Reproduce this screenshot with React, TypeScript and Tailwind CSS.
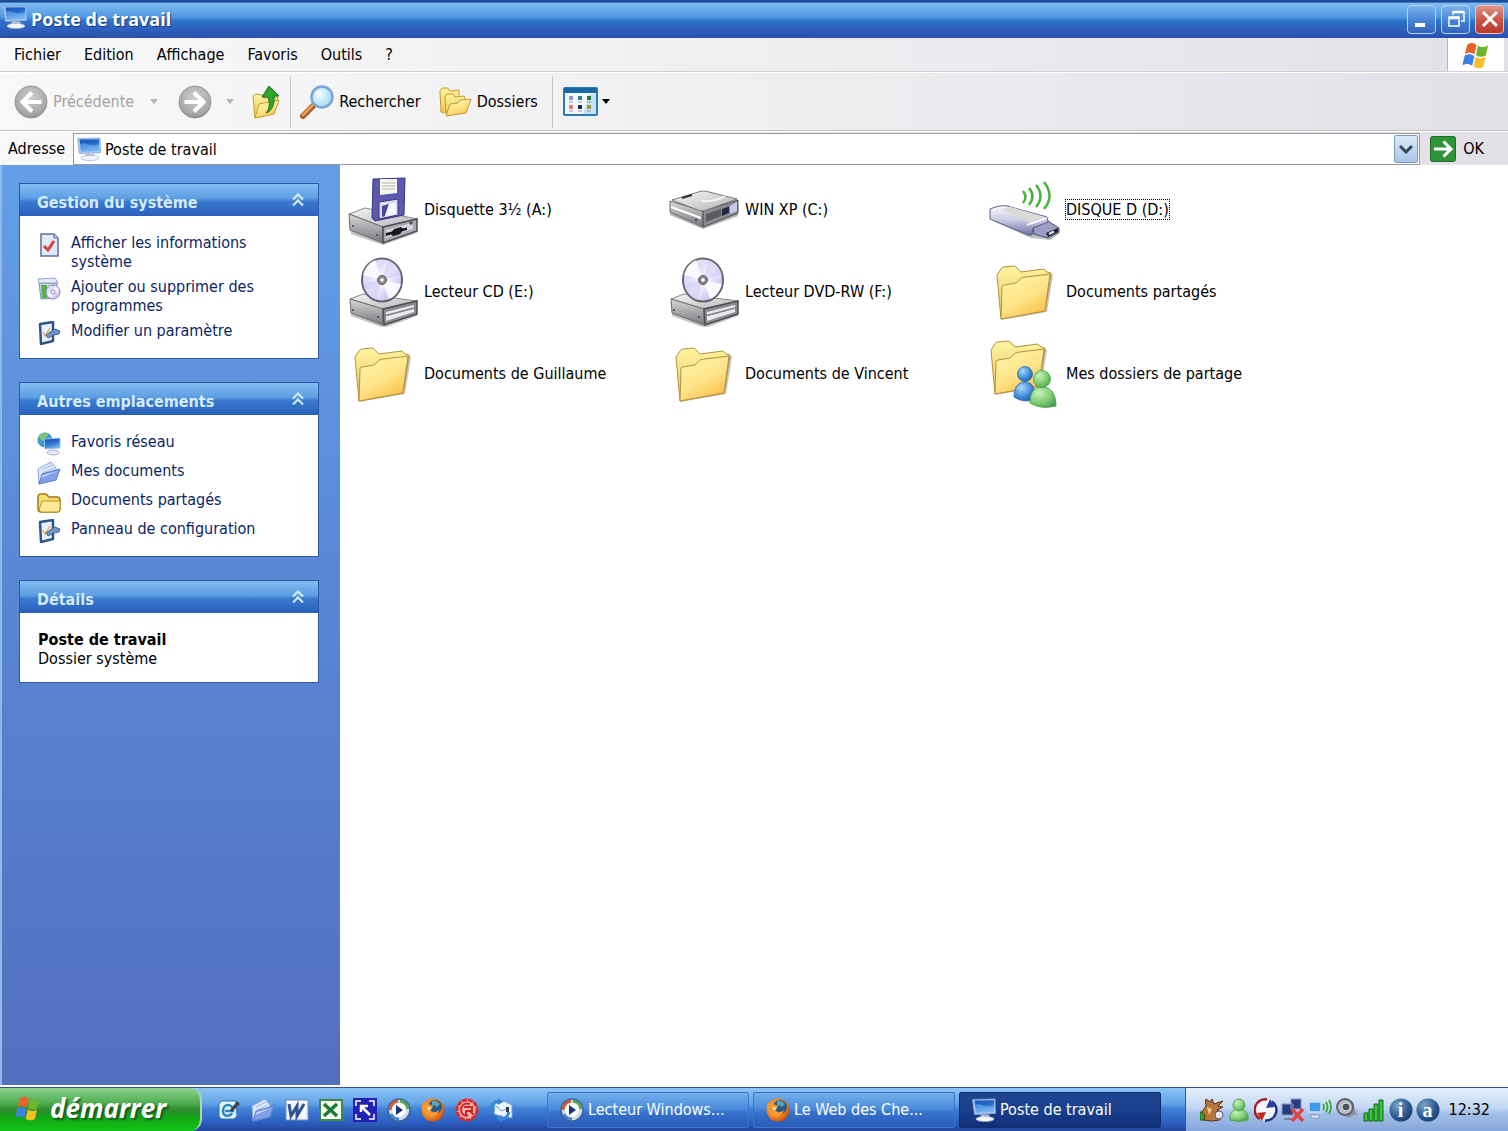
import { ReactNode } from "react";
import { clsx } from "clsx";

interface IconProps {
  className?: string;
}

// gradients shared by all of the icons
const IconDefs = () => (
  <svg className="absolute h-0 w-0" aria-hidden="true">
    <defs>
      <linearGradient id="folder" x1="0" y1="0" x2="0.6" y2="1">
        <stop offset="0" stopColor="#fff6b0" />
        <stop offset="0.6" stopColor="#ffe489" />
        <stop offset="1" stopColor="#f8c24c" />
      </linearGradient>
      <linearGradient id="folderBack" x1="0" y1="0" x2="0" y2="1">
        <stop offset="0" stopColor="#fff4a4" />
        <stop offset="1" stopColor="#ecc44f" />
      </linearGradient>
      <linearGradient id="metal" x1="0" y1="0" x2="1" y2="1">
        <stop offset="0" stopColor="#f6f6f6" />
        <stop offset="1" stopColor="#b4b4b8" />
      </linearGradient>
      <linearGradient id="metalSide" x1="0" y1="0" x2="0" y2="1">
        <stop offset="0" stopColor="#d8d8da" />
        <stop offset="1" stopColor="#77777c" />
      </linearGradient>
      <linearGradient id="disc" x1="0" y1="0" x2="1" y2="1">
        <stop offset="0" stopColor="#f4f3fd" />
        <stop offset="0.3" stopColor="#dcdaf8" />
        <stop offset="0.5" stopColor="#fbfbff" />
        <stop offset="0.75" stopColor="#cfcbf6" />
        <stop offset="1" stopColor="#f1effc" />
      </linearGradient>
      <linearGradient id="usb" x1="0" y1="0" x2="0" y2="1">
        <stop offset="0" stopColor="#fbfbff" />
        <stop offset="0.5" stopColor="#c9c9e2" />
        <stop offset="1" stopColor="#6f6fa6" />
      </linearGradient>
      <linearGradient id="screen" x1="0" y1="0" x2="0.4" y2="1">
        <stop offset="0" stopColor="#1a55b4" />
        <stop offset="0.5" stopColor="#2268cc" />
        <stop offset="1" stopColor="#6fb0f0" />
      </linearGradient>
      <radialGradient id="gray" cx="0.5" cy="0.35" r="0.65">
        <stop offset="0" stopColor="#cfcfcf" />
        <stop offset="0.8" stopColor="#a8a8a8" />
        <stop offset="1" stopColor="#909090" />
      </radialGradient>
      <radialGradient id="lens" cx="0.4" cy="0.4" r="0.6">
        <stop offset="0" stopColor="#f2fdff" />
        <stop offset="1" stopColor="#9fdcf5" />
      </radialGradient>
      <radialGradient id="blueBuddy" cx="0.35" cy="0.3" r="0.8">
        <stop offset="0" stopColor="#a9d8fa" />
        <stop offset="0.6" stopColor="#3f8bd8" />
        <stop offset="1" stopColor="#1d5cae" />
      </radialGradient>
      <radialGradient id="greenBuddy" cx="0.35" cy="0.3" r="0.8">
        <stop offset="0" stopColor="#c9f3b8" />
        <stop offset="0.6" stopColor="#7dcb72" />
        <stop offset="1" stopColor="#459a45" />
      </radialGradient>
      <radialGradient id="navy" cx="0.35" cy="0.3" r="0.8">
        <stop offset="0" stopColor="#7fa6cc" />
        <stop offset="0.6" stopColor="#2c5c92" />
        <stop offset="1" stopColor="#153a68" />
      </radialGradient>
      <radialGradient id="fox" cx="0.4" cy="0.4" r="0.7">
        <stop offset="0" stopColor="#ffb347" />
        <stop offset="0.7" stopColor="#e8741c" />
        <stop offset="1" stopColor="#a83c10" />
      </radialGradient>
    </defs>
  </svg>
);

const ComputerIcon = ({ className }: IconProps) => (
  <svg viewBox="0 0 24 24" className={className}>
    <path d="M.5 1.500 23 1 23.500 15.500 2.500 16.500Z" fill="#b4cdf0" stroke="#7fa5d8" strokeWidth=".8" />
    <path d="M2.500 2.500 22 2.200 22.300 14 4 14.800Z" fill="url(#screen)" />
    <path d="M3 7c5-3 9 3 19 1v6L4 14.800Z" fill="#7ab8f4" opacity=".55" />
    <path d="M9 16.500h8l1 3.500H8z" fill="#b9c3dc" />
    <ellipse cx="13" cy="21" rx="9" ry="2.600" fill="#f2f5fb" stroke="#a5b3cf" strokeWidth=".7" />
  </svg>
);

const WindowsFlag = ({ className }: IconProps) => (
  <svg viewBox="0 0 32 30" className={className}>
    <path d="M6.500 4C10 1.500 13 1.500 16.500 4L14.500 14.500C11 12 8 12 4 14Z" fill="#e8622a" />
    <path d="M18 4.800C21.500 7 25 7 29 4.500L26.500 15.500C22.500 17.500 19.500 17.500 16 15.300Z" fill="#6fb52c" />
    <path d="M3.700 15.700C7.500 13.500 10.500 13.700 14.200 16L12 26.500C8.500 24 5.500 24 1.500 26Z" fill="#3d82e0" />
    <path d="M15.700 16.800C19.500 19 22.500 19 26.200 17L23.800 27.500C20 29.800 17 29.500 13.500 27.300Z" fill="#f5c025" />
  </svg>
);

const ArrowCircle = ({ flip }: { flip?: boolean }) => (
  <svg viewBox="0 0 34 34" className={clsx("h-[34px] w-[34px]", flip && "-scale-x-100")}>
    <circle cx="17" cy="17" r="16" fill="url(#gray)" stroke="#969696" />
    <path d="M27.500 17H9M18 7.500 8.500 17 18 26.500" fill="none" stroke="#fff" strokeWidth="4" />
  </svg>
);

const UpFolderIcon = () => (
  <svg viewBox="0 0 28 34" className="h-[34px] w-7">
    <path d="M1 11 4 9l6 1 2 3 14-1-4 16L3 33Z" fill="url(#folderBack)" stroke="#c99b2c" />
    <path d="M3 33 7 19l20-4-5 14Z" fill="url(#folder)" stroke="#c99b2c" />
    <path d="M14 28c4-4 4-10 2-16h-6L17 1l10 10h-5c1 8-2 15-8 17Z" fill="#2fa52f" stroke="#167516" />
  </svg>
);

const SearchIcon = () => (
  <svg viewBox="0 0 36 36" className="h-9 w-9">
    <path d="M14 22 4 32" stroke="#a85d24" strokeWidth="6" strokeLinecap="round" />
    <path d="M13.500 21.500 4 31" stroke="#e79a55" strokeWidth="3" strokeLinecap="round" />
    <circle cx="23" cy="13" r="10.500" fill="url(#lens)" stroke="#7ba6d4" strokeWidth="2.500" />
    <path d="M16 12c1-5 6-6 9-5-4 0-7 2-9 5Z" fill="#fff" />
  </svg>
);

const FoldersIcon = () => (
  <svg viewBox="0 0 34 32" className="h-8 w-[34px]">
    <path d="M1 5 3 2h6l2 3 9-1v8L5 27 2 26Z" fill="url(#folderBack)" stroke="#c69a31" />
    <path d="M6 11 8 8h6l2 3 9-1 2 5L9 29 7 28Z" fill="url(#folderBack)" stroke="#c69a31" />
    <path d="M7 30 11 18l8-1 2-3 11-1-5 14Z" fill="url(#folder)" stroke="#c69a31" />
  </svg>
);

const ViewsIcon = () => (
  <svg viewBox="0 0 35 29" className="h-[29px] w-[35px]">
    <rect x="1" y="1" width="33" height="27" rx="1" fill="#f3f8fc" stroke="#2a7ab8" strokeWidth="2" />
    <rect x="1" y="1" width="33" height="5" fill="#1c66a5" />
    <path d="M26 7h7v20H20Z" fill="#c5e2f7" />
    <rect x="6" y="9" width="4" height="4" fill="#9d92c8" />
    <rect x="15" y="9" width="4" height="4" fill="#2f7c9e" />
    <rect x="24" y="9" width="4" height="4" fill="#1a7d3c" />
    <rect x="6" y="18" width="4" height="4" fill="#e5796c" />
    <rect x="15" y="18" width="4" height="4" fill="#122a66" />
    <rect x="24" y="18" width="4" height="4" fill="#9c9a3c" />
    <path d="M6 15h4M15 15h4M24 15h4M6 24h4M15 24h4M24 24h4" stroke="#999" />
  </svg>
);

const Caret = ({ className }: IconProps) => (
  <svg viewBox="0 0 8 5" className={clsx("h-[5px] w-2", className)}>
    <path d="M0 0h8L4 5Z" fill="currentColor" />
  </svg>
);

const FloppyDriveIcon = () => (
  <svg viewBox="0 0 72 72" className="h-[72px] w-[72px]">
    <path d="M4 61 36 72 70 60V56H4Z" fill="#555" opacity=".35" />
    <path d="M2 41 18 35 70 46 36 54Z" fill="url(#metal)" stroke="#88888c" />
    <path d="M2 41 36 54V70L3 57Z" fill="url(#metalSide)" stroke="#6d6d72" />
    <path d="M36 54 70 46V58L36 70Z" fill="#a9a9b2" stroke="#4b4b55" strokeWidth="1.500" />
    <path d="M39 57 66 49.500V56L39 65Z" fill="#d5d5e0" />
    <path d="M39 60 45 58.500 47 56 54 54 56 55.500 60 54.500V57L55 58.500 53 61 46 63 44 61.500 39 63Z" fill="#18181c" />
    <circle cx="64" cy="50" r="1.800" fill="#555" />
    <circle cx="6" cy="53" r="1" fill="#444" />
    <circle cx="30" cy="62" r="1" fill="#444" />
    <path d="M26 6 58 5 57 42 28 48 25 45Z" fill="#5b58ae" stroke="#38367e" />
    <path d="M33 6H50V20L33 22Z" fill="#f5f5f2" />
    <path d="M35 10h13M35 13h13M35 16h13" stroke="#b5b5b5" />
    <path d="M32 29 51 26V42L32 46Z" fill="#dcdcea" stroke="#38367e" />
    <path d="M35 33 42 31 38 43 35 44Z" fill="#4a479c" />
    <path d="M42 31 49 30V41L38 43Z" fill="#f5f5ff" />
  </svg>
);

const HardDriveIcon = () => (
  <svg viewBox="0 0 72 72" className="h-[72px] w-[72px]">
    <path d="M2 42 35 56 70 43V39H2Z" fill="#444" opacity=".4" />
    <path d="M2 28 35 38V54L2 39Z" fill="url(#metalSide)" stroke="#6c6c70" />
    <path d="M35 38 70 27V40L35 54Z" fill="#8b8b92" stroke="#4d4d52" />
    <path d="M4 27 32 18.500C34 18 37 18 39 18.500L69 26 37 37.500C35 38 33 38 31 37.500Z" fill="url(#metal)" stroke="#77777c" />
    <path d="M33 28C43 29 52 26 57 23" stroke="#fff" strokeWidth="2" fill="none" opacity=".8" />
    <path d="M14 25 24 22" stroke="#333" strokeWidth="2" />
    <path d="M38 41 53 36V43L38 49Z" fill="#5a5a60" />
    <path d="M54 36 61 33.500V40L54 43Z" fill="#1e2848" />
    <path d="M62 33 69 29V38L62 41Z" fill="#c9c8e6" />
    <path d="M3 34 33 45" stroke="#fff" strokeWidth="2" />
    <circle cx="28" cy="47" r="1.200" fill="#444" />
  </svg>
);

const DiscDriveIcon = () => (
  <svg viewBox="0 0 72 72" className="h-[72px] w-[72px]">
    <path d="M4 61 37 73 70 61V56H4Z" fill="#555" opacity=".35" />
    <path d="M3 44 16 39 70 46 36 54Z" fill="url(#metal)" stroke="#88888c" />
    <path d="M3 44 36 54V70L4 58Z" fill="url(#metalSide)" stroke="#6d6d72" />
    <path d="M36 54 70 46V59L37 70Z" fill="#8c8c92" stroke="#4b4b50" strokeWidth="1.500" />
    <path d="M39 57 67 50V57L39 66Z" fill="#e9e9ed" />
    <path d="M39 60.500 67 53" stroke="#7d7d82" strokeWidth="1.500" />
    <circle cx="6" cy="55" r="1" fill="#444" />
    <circle cx="31" cy="62" r="1" fill="#444" />
    <ellipse cx="35" cy="25" rx="20" ry="21.500" fill="url(#disc)" stroke="#62626c" strokeWidth="2" />
    <path d="M35 25 16 20C18 12 23 7 28 5Z" fill="#fff" opacity=".8" />
    <path d="M35 25 54 29C52 36 48 42 42 44Z" fill="#fff" opacity=".85" />
    <path d="M35 25 41 5C48 8 52 13 54 20Z" fill="#cfccf7" opacity=".6" />
    <path d="M35 25 16 29C18 37 22 42 29 45Z" fill="#cbc8f5" opacity=".6" />
    <circle cx="35" cy="25" r="4.500" fill="#94868a" stroke="#5f5456" />
    <circle cx="35" cy="25" r="1.800" fill="#fff" />
  </svg>
);

const UsbDriveIcon = () => (
  <svg viewBox="0 0 72 72" className="h-[72px] w-[72px]">
    <path d="M4 48 42 65 62 67 71 60 56 50Z" fill="#444" opacity=".35" />
    <path d="M44 53 59 48 70 55 70 59 59 65 45 61Z" fill="#9c9cc4" stroke="#4c4c74" />
    <path d="M57 60 69 55V59L59 64Z" fill="#1f1f34" />
    <path d="M60 61 65 58.500" stroke="#e4e4f2" strokeWidth="2" />
    <path d="M1 36C6 34 12 32 18 33L58 44 59 49 44 55 43 62 39 62 1 46Z" fill="url(#usb)" stroke="#5c5c8c" />
    <path d="M12 36 22 34 56 44 42 50Z" fill="#d9dad6" />
    <path d="M38 52 58 45" stroke="#fff" strokeWidth="1.500" />
    <path d="M34 18q5 6 0 12M40 15q7 8 0 17M47 12q9 11 0 22M55 9q11 14 0 27" fill="none" stroke="#45b53f" strokeWidth="2.500" />
  </svg>
);

const FolderShape = () => (
  <>
    <path d="M12 65 58 57 64 20 60 17Z" fill="#555" opacity=".35" />
    <path d="M8 20 12 14Q13 12 15 12L25 11Q27 11 28 13L32 17 55 14 58 17 62 18 56 56 12 64Z" fill="url(#folderBack)" stroke="#b3913c" />
    <path d="M12 64 13 32Q13 30 15 30L27 28 33 22.500 61 19 56 56Z" fill="url(#folder)" stroke="#b3913c" />
  </>
);

const FolderIcon = () => (
  <svg viewBox="0 0 72 72" className="h-[72px] w-[72px]">
    <FolderShape />
  </svg>
);

const SharedFolderIcon = () => (
  <svg viewBox="0 0 72 72" className="h-[72px] w-[72px]">
    <g transform="translate(-6 -7)">
      <FolderShape />
    </g>
    <path d="M25 60C25 50 29 45 36 45S46 50 46 62Q35 67 25 60Z" fill="url(#blueBuddy)" stroke="#2c67b0" strokeWidth=".8" />
    <circle cx="36" cy="37" r="7.500" fill="url(#blueBuddy)" stroke="#2c67b0" strokeWidth=".8" />
    <path d="M41 66C41 54 46 50 53 50S67 54 67 69Q52 73 41 66Z" fill="url(#greenBuddy)" stroke="#4f9e50" strokeWidth=".8" />
    <circle cx="53" cy="42" r="8.500" fill="url(#greenBuddy)" stroke="#4f9e50" strokeWidth=".8" />
  </svg>
);

const InfoDocIcon = () => (
  <svg viewBox="0 0 24 24" className="h-6 w-6">
    <path d="M4 1h13l4 4v18H4Z" fill="#dfe9fa" stroke="#5c6f9c" strokeWidth="1.500" />
    <path d="M17 1v4h4" fill="#b9c7e6" stroke="#5c6f9c" />
    <path d="m7 13 4 4 6-9" fill="none" stroke="#d8403a" strokeWidth="3" />
  </svg>
);

const ProgramsIcon = () => (
  <svg viewBox="0 0 24 24" className="h-6 w-6">
    <path d="M2 6h18l-1 15L4 22Z" fill="#c9d5e8" stroke="#7c8eb4" />
    <path d="M1 2 18 1l3 5H2Z" fill="#e4ecf8" stroke="#8fa2c8" />
    <path d="M4 8h6v5l3 2-3 6H5Z" fill="#54b04d" />
    <circle cx="16" cy="15" r="7" fill="url(#disc)" stroke="#8b8bb4" />
    <circle cx="16" cy="15" r="2" fill="#fff" stroke="#8b8bb4" />
  </svg>
);

const SettingIcon = () => (
  <svg viewBox="0 0 24 24" className="h-6 w-6">
    <path d="M3 3 16 1v19L4 23Z" fill="#e9f2fc" stroke="#2f5488" strokeWidth="2.500" strokeLinejoin="round" />
    <path d="m6 11 2 4 5-8" fill="none" stroke="#e8b45c" strokeWidth="1.500" />
    <path d="m9 14 7-5 2-1 5 2-1 3-5 1-6 3Z" fill="#6f93c4" stroke="#34527f" strokeWidth=".8" />
  </svg>
);

const NetworkIcon = () => (
  <svg viewBox="0 0 24 24" className="h-6 w-6">
    <circle cx="8" cy="8" r="7.500" fill="#3f97cc" />
    <path d="M2 5c3-5 8-5 9-3s-2 2-3 5-4 2-6-2Z" fill="#7cc878" />
    <path d="m7 7 16-1v10L8 17Z" fill="url(#screen)" stroke="#9fc0e8" />
    <ellipse cx="16" cy="20.500" rx="6" ry="2.500" fill="#e4e8f0" stroke="#a9b3c9" />
  </svg>
);

const MyDocsIcon = () => (
  <svg viewBox="0 0 24 24" className="h-6 w-6">
    <path d="M1 8 14 1l5 6-1 12-16 4Z" fill="#dfe8fb" stroke="#8ba5dd" />
    <path d="M5 9 15 4M6 12l11-5" stroke="#9eb3e0" />
    <path d="M2 23 5 13l18-5-4 11Z" fill="#7f9fe8" stroke="#5d7ecb" />
    <path d="m4 17 2-3 15-4Z" fill="#c4d5fa" />
  </svg>
);

const SmallFolderIcon = () => (
  <svg viewBox="0 0 24 24" className="h-6 w-6">
    <path d="M1 7q0-3 3-3h5l3 3h8q3 0 3 3v9q0 3-3 3H4q-3 0-3-3Z" fill="#f9dd6d" stroke="#9c7a22" strokeWidth="1.500" />
    <path d="M2 20 5 11h18v8q0 3-3 3H4Z" fill="#fdec94" stroke="#b9922f" />
  </svg>
);

const IeIcon = () => (
  <svg viewBox="0 0 24 24" className="h-6 w-6">
    <path d="M5 3h14l1 15-3 3H4l-2-3V6Z" fill="#e6f5fd" stroke="#2476b8" />
    <path d="M15 15c-2 4-9 4-9-2 0-8 10-8 10 0H8" fill="none" stroke="#2b86c8" strokeWidth="2.500" />
    <path d="m13 12 7-9 3 3-8 8Z" fill="#3e464f" />
  </svg>
);

const WordIcon = () => (
  <svg viewBox="0 0 24 24" className="h-6 w-6">
    <path d="M1 2h22v20H1Z" fill="#f4f7fd" stroke="#6e86b8" />
    <path d="m4 6 2 12 6-10v10l7-12" fill="none" stroke="#31518f" strokeWidth="3" />
  </svg>
);

const ExcelIcon = () => (
  <svg viewBox="0 0 24 24" className="h-6 w-6">
    <path d="M1 2h22v20H1Z" fill="#f2f8f0" stroke="#3e8a4a" strokeWidth="2" />
    <path d="m5 6 13 12M18 6 5 18" stroke="#1f7a35" strokeWidth="3.500" />
  </svg>
);

const CornerArrowIcon = () => (
  <svg viewBox="0 0 24 24" className="h-6 w-6">
    <path d="M0 0h24v24H0Z" fill="#2320b4" />
    <path d="M3 8V3h5M16 3h5v5M21 16v5h-5M8 21H3v-5" fill="none" stroke="#fff" strokeWidth="1.500" />
    <path d="M8 14V8h7M8 8l9 9" fill="none" stroke="#fff" strokeWidth="2.500" />
  </svg>
);

const MediaIcon = () => (
  <svg viewBox="0 0 24 24" className="h-6 w-6">
    <circle cx="12" cy="12" r="11" fill="#cfdcec" stroke="#3f6296" strokeWidth="1.500" />
    <path d="M3 12a9 9 0 0 1 8-9" fill="none" stroke="#cf5a34" strokeWidth="3" />
    <path d="M13 3a9 9 0 0 1 8 8" fill="none" stroke="#5aa64c" strokeWidth="3" />
    <path d="M4 16a9 9 0 0 0 8 5" fill="none" stroke="#3c7ed0" strokeWidth="2.500" />
    <circle cx="12" cy="12" r="7" fill="#fff" />
    <path d="m9 7 7 5-7 5Z" fill="#17347c" />
  </svg>
);

const FirefoxIcon = () => (
  <svg viewBox="0 0 24 24" className="h-6 w-6">
    <circle cx="12" cy="12" r="11.500" fill="url(#fox)" />
    <circle cx="14" cy="9" r="7" fill="#2c5a86" />
    <path d="M11 3c3-1 6 0 8 3l-3 3-3-2-2 2Z" fill="#59a5b8" />
    <path d="M2 4l4 3c3-1 5 0 6 2l-3 2c1 4 6 4 9 1-1 5-6 8-10 6S-1 11 2 4Z" fill="#f59a32" />
    <path d="M6 9c2 0 4 0 5 1l-3 3Z" fill="#ffe0a0" />
  </svg>
);

const RedIcon = () => (
  <svg viewBox="0 0 24 24" className="h-6 w-6">
    <circle cx="12" cy="12" r="10" fill="#f6b3ae" stroke="#da2a28" strokeWidth="3" strokeDasharray="5 1" />
    <path d="M15 6c-6-2-9 2-9 6s4 7 7 5M9 9h8v4h-6v5M15 13l4 4" fill="none" stroke="#d02424" strokeWidth="2" />
  </svg>
);

const OutlookIcon = () => (
  <svg viewBox="0 0 24 24" className="h-6 w-6">
    <path d="m6 6 9-3 8 4v13l-9-1-9-3Z" fill="#eef5fd" stroke="#6f9ad0" />
    <path d="m7 8 6 5 7-4" fill="none" stroke="#7b98c4" />
    <path d="M1 10c0-5 4-8 8-8V0l5 4-5 3V5C6 5 4 7 4 10ZM21 14c0 5-4 9-8 8v2l-6-4 6-3v2c3 0 5-2 5-5Z" fill="#3589dc" />
    <path d="M17 9h3v5h-3Z" fill="#2a3c66" />
  </svg>
);

const SquirrelIcon = () => (
  <svg viewBox="0 0 24 24" className="h-6 w-6">
    <path d="M0 14h6v8H0Z" fill="#2fa534" stroke="#176b1c" />
    <path d="M6 8c0-2-1-4 0-7l4 3 2-3 2 5 9-3-5 5 5 1-6 3 4 2-3 3 2 5-9 1-7-1 1-5-3-3Z" fill="#b8763a" stroke="#5a3012" />
    <path d="M7 9 12 11 9 17Z" fill="#f0c48a" />
    <circle cx="19" cy="17" r="4" fill="#e4e9f0" stroke="#555f70" />
  </svg>
);

const BuddyIcon = () => (
  <svg viewBox="0 0 24 24" className="h-6 w-6">
    <path d="M3 22c-1-7 3-11 9-11s10 4 9 11q-9 3-18 0Z" fill="url(#greenBuddy)" stroke="#5aa858" />
    <circle cx="12" cy="7" r="6" fill="url(#greenBuddy)" stroke="#5aa858" />
  </svg>
);

const SyncIcon = () => (
  <svg viewBox="0 0 24 24" className="h-6 w-6">
    <circle cx="12" cy="12" r="11" fill="#f4f4fa" />
    <path d="M6 21A10.500 10.500 0 0 1 13 1.500" fill="none" stroke="#a51d20" strokeWidth="2.500" />
    <path d="M18 3.500A10.500 10.500 0 0 1 11 22.500" fill="none" stroke="#1c2f86" strokeWidth="2.500" />
    <path d="m3 15 9-1-4 9Z" fill="#c22724" />
    <path d="m21 9-9 1 4-9Z" fill="#263c9c" />
  </svg>
);

const OfflineIcon = () => (
  <svg viewBox="0 0 24 24" className="h-6 w-6">
    <path d="M10 1h10v10H10ZM1 6h11v11H1Z" fill="#2b3d80" stroke="#8c98bf" />
    <path d="M3 20h9v2H3Z" fill="#77809d" />
    <path d="m11 11 11 12M22 11 11 23" stroke="#e04545" strokeWidth="3.500" />
  </svg>
);

const WirelessIcon = () => (
  <svg viewBox="0 0 24 24" className="h-6 w-6">
    <path d="M1 4h12v10H1Z" fill="#3d9bea" stroke="#c9e0f7" strokeWidth="1.500" />
    <path d="M3 17h8v3H3Z" fill="#e8edf6" stroke="#8195bb" />
    <path d="M15 6q2 3 0 6M18 4q3 5 0 10M21 2q4 7 0 14" fill="none" stroke="#3ca83a" strokeWidth="1.800" />
  </svg>
);

const SpeakerIcon = () => (
  <svg viewBox="0 0 24 24" className="h-6 w-6">
    <path d="m2 7 7-6 9 3 3 12-7 4-9-4Z" fill="#8d939f" />
    <ellipse cx="10" cy="9" rx="8" ry="8" fill="#b9bdc6" stroke="#5c616d" strokeWidth="2" />
    <circle cx="11" cy="9" r="4" fill="#4d525e" stroke="#dfe2e8" />
    <path d="M19 21q4-3 3-9" fill="none" stroke="#8d9bc0" />
  </svg>
);

const SignalIcon = () => (
  <svg viewBox="0 0 24 24" className="h-6 w-6">
    <path d="M2 15h4v8H2ZM7 11h4v12H7ZM12 6h4v17h-4ZM17 2h4v21h-4Z" fill="#35c738" stroke="#12641a" />
  </svg>
);

const LetterIcon = ({ letter }: { letter: string }) => (
  <span className="relative flex h-6 w-6 items-center justify-center">
    <svg viewBox="0 0 24 24" className="absolute inset-0 h-6 w-6">
      <circle cx="12" cy="12" r="11.500" fill="url(#navy)" />
    </svg>
    <span className="relative font-['Liberation_Serif',serif] text-xl leading-5 font-bold text-white">{letter}</span>
  </span>
);

const menus = ["Fichier", "Edition", "Affichage", "Favoris", "Outils", "?"];

const files = [
  { name: "Disquette 3½ (A:)", icon: <FloppyDriveIcon /> },
  { name: "WIN XP (C:)", icon: <HardDriveIcon /> },
  { name: "DISQUE D (D:)", icon: <UsbDriveIcon />, focused: true },
  { name: "Lecteur CD (E:)", icon: <DiscDriveIcon /> },
  { name: "Lecteur DVD-RW (F:)", icon: <DiscDriveIcon /> },
  { name: "Documents partagés", icon: <FolderIcon /> },
  { name: "Documents de Guillaume", icon: <FolderIcon /> },
  { name: "Documents de Vincent", icon: <FolderIcon /> },
  { name: "Mes dossiers de partage", icon: <SharedFolderIcon /> },
];

const systemTasks = [
  { label: "Afficher les informations système", icon: <InfoDocIcon /> },
  { label: "Ajouter ou supprimer des programmes", icon: <ProgramsIcon /> },
  { label: "Modifier un paramètre", icon: <SettingIcon /> },
];

const places = [
  { label: "Favoris réseau", icon: <NetworkIcon /> },
  { label: "Mes documents", icon: <MyDocsIcon /> },
  { label: "Documents partagés", icon: <SmallFolderIcon /> },
  { label: "Panneau de configuration", icon: <SettingIcon /> },
];

const quickLaunch = [
  { label: "Internet Explorer", icon: <IeIcon /> },
  { label: "Mes documents", icon: <MyDocsIcon /> },
  { label: "Word", icon: <WordIcon /> },
  { label: "Excel", icon: <ExcelIcon /> },
  { label: "Capture", icon: <CornerArrowIcon /> },
  { label: "Lecteur Windows Media", icon: <MediaIcon /> },
  { label: "Firefox", icon: <FirefoxIcon /> },
  { label: "Antivirus", icon: <RedIcon /> },
  { label: "Outlook Express", icon: <OutlookIcon /> },
];

const tasks = [
  { label: "Lecteur Windows...", icon: <MediaIcon /> },
  { label: "Le Web des Che...", icon: <FirefoxIcon /> },
  { label: "Poste de travail", icon: <ComputerIcon className="h-6 w-6" />, active: true },
];

const Panel = ({ title, children }: { title: string; children: ReactNode }) => (
  <section className="border border-[#2b58a8] bg-white">
    <button className="flex h-8 w-full items-center justify-between bg-[linear-gradient(to_bottom,#84bdf0_0%,#5c9de3_45%,#3a7ad0_55%,#2a5fbb_100%)] pr-3.5 pl-[17px] font-bold text-[#d6ecff]">
      <span className="pt-1">{title}</span>
      <svg viewBox="0 0 12 14" className="h-3.5 w-3">
        <path d="m1 6.500 5-5 5 5M1 12.500l5-5 5 5" fill="none" stroke="#d6ecff" strokeWidth="2" />
      </svg>
    </button>
    {children}
  </section>
);

const TaskList = ({ items, className }: { items: { label: string; icon: ReactNode }[]; className?: string }) => (
  <ul className={clsx("flex flex-col pt-[17px] pl-[17px]", className)}>
    {items.map((item) => (
      <li key={item.label}>
        <a href="#" className="flex gap-2.5 text-[#0a2566]">
          <span className="-mb-1 h-5 shrink-0">{item.icon}</span>
          <span className="w-52">{item.label}</span>
        </a>
      </li>
    ))}
  </ul>
);

const windowButton =
  "flex h-[29px] w-[29px] items-center justify-center rounded border border-[#b4d3f5] bg-[linear-gradient(to_bottom,#7db4ec,#4a86d8_50%,#3163bd)]";

const App = () => {
  return (
    <div className="flex min-h-screen flex-col bg-white font-['DejaVu_Sans_Condensed','Noto_Sans',sans-serif] text-base leading-[19px] text-black">
      <IconDefs />

      <header className="flex h-[38px] items-center bg-[linear-gradient(to_bottom,#1b4a96_0%,#1b4a96_5%,#7cbcf0_9%,#4f98e2_45%,#2f72cc_55%,#2a4fae_100%)] pr-1 pl-[3px]">
        <ComputerIcon className="mb-1 h-6 w-6" />
        <h1 className="ml-1 font-['Open_Sans',sans-serif] text-lg leading-6 font-bold text-white [text-shadow:1px_1px_1px_#123a80]">
          Poste de travail
        </h1>
        <div className="ml-auto flex gap-[5px]">
          <button aria-label="Réduire" className={windowButton}>
            <svg viewBox="0 0 20 20" className="h-5 w-5">
              <path d="M3 14h10v4H3Z" fill="#fff" />
            </svg>
          </button>
          <button aria-label="Restaurer" className={windowButton}>
            <svg viewBox="0 0 20 20" className="h-5 w-5">
              <path d="M7 6V3h11v9h-3M3 8h10v9H3Z" fill="none" stroke="#fff" strokeWidth="1.500" />
              <path d="M7 3h11M3 9h10" stroke="#fff" strokeWidth="2.500" />
            </svg>
          </button>
          <button
            aria-label="Fermer"
            className="flex h-[29px] w-[29px] items-center justify-center rounded border border-[#f0c0b8] bg-[linear-gradient(to_bottom,#de9488,#cb5848_50%,#b8392a)]"
          >
            <svg viewBox="0 0 20 20" className="h-5 w-5">
              <path d="m3 3 14 14M17 3 3 17" stroke="#fff" strokeWidth="3" />
            </svg>
          </button>
        </div>
      </header>

      <div className="bg-[linear-gradient(to_right,#f8f8f9,#f1f1f3_40%,#e2e0e6)]">
        <nav className="flex h-[34px] items-center border-b border-[#cfcfd2] pl-3.5">
          <div className="flex gap-[23px]">
            {menus.map((menu) => (
              <button key={menu}>{menu}</button>
            ))}
          </div>
          <div className="mr-1 ml-auto flex h-[33px] w-[57px] items-center justify-center border-l border-[#b9b9bd] bg-white">
            <WindowsFlag className="h-7 w-[30px]" />
          </div>
        </nav>

        <div className="flex h-[59px] items-center border-t border-b border-t-white border-b-[#c4c4c8] pl-3.5">
          <button className="flex items-center text-[#a3a3a3]">
            <ArrowCircle />
            <span className="ml-[5px]">Précédente</span>
            <Caret className="ml-4 text-[#b5b5b5]" />
          </button>
          <button aria-label="Suivante" className="ml-5 flex items-center text-[#b5b5b5]">
            <ArrowCircle flip />
            <Caret className="ml-3.5" />
          </button>
          <button aria-label="Dossier parent" className="ml-[18px]">
            <UpFolderIcon />
          </button>
          <div className="mr-2 ml-2.5 h-[52px] w-px bg-[#c6c6ca]" />
          <button className="flex items-center">
            <SearchIcon />
            <span className="ml-1">Rechercher</span>
          </button>
          <button className="ml-[18px] flex items-center">
            <FoldersIcon />
            <span className="ml-1">Dossiers</span>
          </button>
          <div className="mr-2.5 ml-3.5 h-[52px] w-px bg-[#c6c6ca]" />
          <button aria-label="Affichage" className="flex items-center">
            <ViewsIcon />
            <Caret className="ml-1" />
          </button>
        </div>

        <div className="flex h-[34px] items-center border-t border-white pl-2">
          <label htmlFor="address">Adresse</label>
          <div className="ml-2 flex h-8 min-w-0 flex-1 items-center border border-[#9a9a9e] bg-white">
            <ComputerIcon className="ml-[3px] h-6 w-6 shrink-0" />
            <input id="address" defaultValue="Poste de travail" className="ml-1 min-w-0 flex-1 pt-0.5 outline-none" />
            <button
              aria-label="Dérouler"
              className="mr-px flex h-7 w-6 items-center justify-center rounded-xs border border-[#7b9cc0] bg-[linear-gradient(to_bottom,#dcebfa,#a9c5e6)]"
            >
              <svg viewBox="0 0 14 10" className="h-2.5 w-3.5">
                <path d="m1 2 6 6 6-6" fill="none" stroke="#36465e" strokeWidth="3" />
              </svg>
            </button>
          </div>
          <button className="mr-6 ml-2.5 flex items-center gap-[7px]">
            <svg viewBox="0 0 26 26" className="h-[26px] w-[26px]">
              <rect x=".5" y=".5" width="25" height="25" rx="2" fill="#2f9438" stroke="#1f6b28" />
              <path d="M4 13h17M13.500 5.500 21 13l-7.500 7.500" fill="none" stroke="#fff" strokeWidth="3" />
            </svg>
            OK
          </button>
        </div>
      </div>

      <div className="flex flex-1">
        <aside className="flex w-[340px] shrink-0 flex-col gap-[23px] border-l-2 border-[#8fb8ec] bg-[linear-gradient(to_bottom,#649fe6_0%,#5987d4_45%,#536fbd_100%)] pt-[18px] pr-[21px] pl-[17px]">
          <Panel title="Gestion du système">
            <TaskList items={systemTasks} className="gap-1.5 pb-[18px]" />
          </Panel>
          <Panel title="Autres emplacements">
            <TaskList items={places} className="gap-2.5 pb-[18px]" />
          </Panel>
          <Panel title="Détails">
            <div className="pt-[17px] pb-3.5 pl-[18px]">
              <p className="font-bold">Poste de travail</p>
              <p>Dossier système</p>
            </div>
          </Panel>
        </aside>

        <main className="grid flex-1 grid-cols-[repeat(auto-fill,321px)] content-start gap-y-2.5 pt-2 pl-[7px]">
          {files.map((file) => (
            <button key={file.name} className="flex items-center gap-[5px] text-left">
              {file.icon}
              <span className={clsx(file.focused && "outline-1 outline-black outline-dotted")}>{file.name}</span>
            </button>
          ))}
        </main>
      </div>

      <footer className="mt-0.5 flex h-11 items-stretch border-t border-[#34508c] bg-[linear-gradient(to_bottom,#8cc4f5_0%,#64a5e8_35%,#3f7fd6_50%,#2c5fc0_80%,#23469c_100%)] text-white">
        <button className="flex w-[202px] items-center rounded-r-xl border-r-2 border-[#a9d8b0] bg-[linear-gradient(to_bottom,#8fd08f_0%,#4fae50_35%,#2a8a2a_52%,#0fa814_70%,#12c418_100%)] pb-1 pl-3.5">
          <WindowsFlag className="h-7 w-7" />
          <span className="ml-2 font-['Open_Sans',sans-serif] text-[26px] leading-7 font-bold italic [text-shadow:2px_2px_2px_#1b5a1b]">
            démarrer
          </span>
        </button>
        <div className="ml-[15px] flex items-center gap-2.5">
          {quickLaunch.map((item) => (
            <button key={item.label} aria-label={item.label}>
              {item.icon}
            </button>
          ))}
        </div>
        <div className="ml-[34px] flex items-center gap-1">
          {tasks.map((task) => (
            <button
              key={task.label}
              className={clsx(
                "flex h-9 w-[202px] items-center gap-1 rounded-xs border pl-3",
                task.active
                  ? "border-[#122c6c] bg-[linear-gradient(to_bottom,#1c4590,#1a3f8c_50%,#0f2f7c)]"
                  : "border-[#3c74c8] bg-[linear-gradient(to_bottom,#74b0ec,#4b8bdc_45%,#3470cc_60%,#2b5cb8)]"
              )}
            >
              {task.icon}
              <span>{task.label}</span>
            </button>
          ))}
        </div>
        <div className="ml-auto flex items-center gap-[3px] border-l border-[#2b55a8] bg-[linear-gradient(to_bottom,#e3eefb_0%,#c4d8f3_45%,#a3bfe8_60%,#86a6dc_100%)] pr-[18px] pl-3.5 text-black">
          <SquirrelIcon />
          <BuddyIcon />
          <SyncIcon />
          <OfflineIcon />
          <WirelessIcon />
          <SpeakerIcon />
          <SignalIcon />
          <LetterIcon letter="i" />
          <LetterIcon letter="a" />
          <time className="ml-1.5">12:32</time>
        </div>
      </footer>
    </div>
  );
};

export default App;
